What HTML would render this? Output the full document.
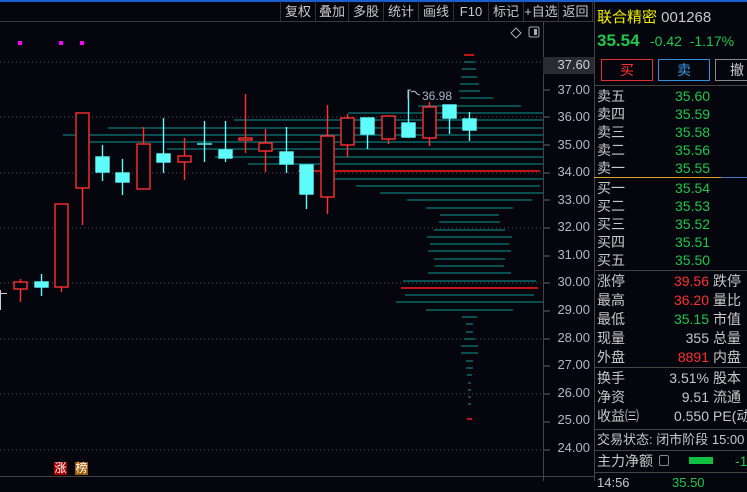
<!DOCTYPE html>
<html><head><meta charset="utf-8"><style>
*{margin:0;padding:0;box-sizing:border-box}
body{width:747px;height:481px;overflow:hidden;background:#05050d;font-family:"Liberation Sans","Noto Sans CJK SC",sans-serif;position:relative;color:#c8c8c8}
.a{position:absolute;white-space:nowrap}
.tb{position:absolute;top:1px;height:21px;font-size:13px;line-height:21px;color:#c8c8c8;text-align:center;border-left:1px solid #333}
.ax{position:absolute;right:157px;font-size:13px;color:#b4b8c4;width:48px;text-align:right}
.r{position:absolute;font-size:14px;line-height:18px;height:18px}
.g{color:#1ec84a}.rd{color:#ff3030}
</style></head><body>
<div class="a" style="left:0;top:0;width:747px;height:2px;background:#1a5fd0"></div>
<div class="a" style="left:0;top:21px;width:594px;height:1px;background:#3a3a3a"></div>
<div class="tb" style="left:280px;width:35px">复权</div>
<div class="tb" style="left:315px;width:33px">叠加</div>
<div class="tb" style="left:348px;width:35px">多股</div>
<div class="tb" style="left:383px;width:35px">统计</div>
<div class="tb" style="left:418px;width:35px">画线</div>
<div class="tb" style="left:453px;width:35px">F10</div>
<div class="tb" style="left:488px;width:35px">标记</div>
<div class="tb" style="left:523px;width:35px">+自选</div>
<div class="tb" style="left:558px;width:35px;border-right:1px solid #333">返回</div>
<svg class="a" style="left:0;top:0" width="594" height="481">
<g stroke="#555" stroke-dasharray="1,3">
<line x1="0" y1="62" x2="543" y2="62"/><line x1="0" y1="117" x2="543" y2="117"/><line x1="0" y1="173" x2="543" y2="173"/><line x1="0" y1="228" x2="543" y2="228"/><line x1="0" y1="283" x2="543" y2="283"/><line x1="0" y1="339" x2="543" y2="339"/><line x1="0" y1="394" x2="543" y2="394"/><line x1="0" y1="450" x2="543" y2="450"/>
</g>
<line x1="543.5" y1="22" x2="543.5" y2="481" stroke="#444"/>
<line x1="0" y1="476.5" x2="594" y2="476.5" stroke="#444"/>
<g stroke="#666"><line x1="544" y1="90" x2="550" y2="90"/><line x1="544" y1="117" x2="550" y2="117"/><line x1="544" y1="145" x2="550" y2="145"/><line x1="544" y1="173" x2="550" y2="173"/><line x1="544" y1="200" x2="550" y2="200"/><line x1="544" y1="228" x2="550" y2="228"/><line x1="544" y1="256" x2="550" y2="256"/><line x1="544" y1="283" x2="550" y2="283"/><line x1="544" y1="311" x2="550" y2="311"/><line x1="544" y1="339" x2="550" y2="339"/><line x1="544" y1="366" x2="550" y2="366"/><line x1="544" y1="394" x2="550" y2="394"/><line x1="544" y1="422" x2="550" y2="422"/><line x1="544" y1="450" x2="550" y2="450"/></g>
<g stroke="#0a7a7a" stroke-width="1.3">
<line x1="464" y1="62" x2="475" y2="62"/><line x1="462" y1="69" x2="476" y2="69"/><line x1="461" y1="77" x2="477" y2="77"/><line x1="460" y1="84" x2="479" y2="84"/><line x1="459" y1="91" x2="480" y2="91"/><line x1="460" y1="98" x2="493" y2="98"/><line x1="418" y1="106" x2="521" y2="106"/><line x1="348" y1="113" x2="543" y2="113"/>
<line x1="234" y1="120" x2="543" y2="120"/><line x1="108" y1="128" x2="543" y2="128"/><line x1="63" y1="135" x2="543" y2="135"/><line x1="87" y1="142" x2="543" y2="142"/><line x1="167" y1="149" x2="543" y2="149"/><line x1="215" y1="157" x2="543" y2="157"/><line x1="248" y1="164" x2="543" y2="164"/>
<line x1="334" y1="179" x2="543" y2="179"/><line x1="356" y1="186" x2="540" y2="186"/><line x1="380" y1="193" x2="543" y2="193"/><line x1="407" y1="200" x2="532" y2="200"/><line x1="426" y1="208" x2="513" y2="208"/><line x1="440" y1="215" x2="499" y2="215"/><line x1="439" y1="222" x2="500" y2="222"/><line x1="434" y1="230" x2="505" y2="230"/><line x1="427" y1="237" x2="512" y2="237"/><line x1="430" y1="244" x2="509" y2="244"/><line x1="428" y1="251" x2="511" y2="251"/><line x1="434" y1="259" x2="505" y2="259"/><line x1="435" y1="266" x2="504" y2="266"/><line x1="428" y1="273" x2="511" y2="273"/><line x1="403" y1="281" x2="536" y2="281"/><line x1="405" y1="295" x2="534" y2="295"/><line x1="396" y1="302" x2="543" y2="302"/><line x1="426" y1="310" x2="513" y2="310"/><line x1="462" y1="317" x2="477" y2="317"/><line x1="466" y1="324" x2="473" y2="324"/><line x1="466" y1="332" x2="473" y2="332"/><line x1="464" y1="339" x2="475" y2="339"/><line x1="461" y1="346" x2="478" y2="346"/><line x1="461" y1="353" x2="478" y2="353"/><line x1="466" y1="361" x2="473" y2="361"/><line x1="466" y1="368" x2="473" y2="368"/><line x1="467" y1="375" x2="472" y2="375"/><line x1="468" y1="383" x2="471" y2="383"/><line x1="468" y1="390" x2="471" y2="390"/><line x1="468" y1="397" x2="471" y2="397"/><line x1="468" y1="404" x2="471" y2="404"/>
</g>
<g stroke="#ff1a1a" stroke-width="1.5"><line x1="298" y1="171" x2="540" y2="171"/><line x1="401" y1="288" x2="538" y2="288"/><line x1="464" y1="55" x2="474" y2="55"/><line x1="467" y1="419" x2="472" y2="419"/></g>
<g stroke="#ccc"><line x1="0.5" y1="290" x2="0.5" y2="310"/><line x1="0" y1="293.5" x2="7" y2="293.5"/></g>
<g stroke="#ff3030" fill="#05050d" stroke-width="1.4">
<line x1="20.5" y1="279" x2="20.5" y2="302"/><rect x="14" y="282" width="13" height="7"/>
<line x1="61.5" y1="287" x2="61.5" y2="292"/><rect x="55" y="204" width="13" height="83"/>
<line x1="82.5" y1="188" x2="82.5" y2="225"/><rect x="76" y="113" width="13" height="75"/>
<line x1="143.5" y1="127" x2="143.5" y2="144"/><rect x="137" y="144" width="13" height="45"/>
<line x1="184.5" y1="138" x2="184.5" y2="180"/><rect x="178" y="156" width="13" height="6"/>
<line x1="245.5" y1="94" x2="245.5" y2="153"/><rect x="239" y="138" width="13" height="2"/>
<line x1="265.5" y1="129" x2="265.5" y2="172"/><rect x="259" y="143" width="13" height="8"/>
<line x1="327.5" y1="105" x2="327.5" y2="214"/><rect x="321" y="136" width="13" height="61"/>
<line x1="347.5" y1="114" x2="347.5" y2="157"/><rect x="341" y="118" width="13" height="27"/>
<line x1="388.5" y1="115" x2="388.5" y2="144"/><rect x="382" y="116" width="13" height="23"/>
<line x1="429.5" y1="102" x2="429.5" y2="146"/><rect x="423" y="107" width="13" height="31"/>
</g>
<g stroke="#5ffcfc" fill="#5ffcfc" stroke-width="1.4">
<line x1="41.5" y1="274" x2="41.5" y2="296"/><rect x="35" y="282" width="13" height="5"/>
<line x1="102.5" y1="145" x2="102.5" y2="181"/><rect x="96" y="157" width="13" height="15"/>
<line x1="122.5" y1="159" x2="122.5" y2="195"/><rect x="116" y="173" width="13" height="9"/>
<line x1="163.5" y1="118" x2="163.5" y2="173"/><rect x="157" y="154" width="13" height="8"/>
<line x1="204.5" y1="121" x2="204.5" y2="162"/><line x1="197" y1="144" x2="212" y2="144"/>
<line x1="225.5" y1="121" x2="225.5" y2="162"/><rect x="219" y="150" width="13" height="8"/>
<line x1="286.5" y1="127" x2="286.5" y2="173"/><rect x="280" y="152" width="13" height="12"/>
<line x1="306.5" y1="194" x2="306.5" y2="209"/><rect x="300" y="165" width="13" height="29"/>
<line x1="367.5" y1="118" x2="367.5" y2="149"/><rect x="361" y="118" width="13" height="16"/>
<line x1="408.5" y1="90" x2="408.5" y2="138"/><rect x="402" y="123" width="13" height="14"/>
<line x1="449.5" y1="105" x2="449.5" y2="134"/><rect x="443" y="105" width="13" height="13"/>
<line x1="469.5" y1="112" x2="469.5" y2="141"/><rect x="463" y="119" width="13" height="11"/>
</g>
<g fill="#ff00ff"><rect x="18" y="41" width="4" height="4"/><rect x="59" y="41" width="4" height="4"/><rect x="80" y="41" width="4" height="4"/></g>
<path d="M408 99 V90 h3 M411 92 q4 -2 6 2 l3 1" stroke="#bbb" fill="none"/>
<text x="422" y="100" font-size="12" fill="#a8b4c8" font-family="Liberation Sans">36.98</text>
<path d="M516 28 l5 5 -5 5 -5 -5z" stroke="#aaa" fill="none"/>
<rect x="529" y="27" width="10" height="10" rx="1.5" stroke="#aaa" fill="none"/><rect x="534" y="29" width="3" height="6" fill="#aaa"/>
</svg>
<div class="a" style="left:543px;top:57px;width:51px;height:17px;background:#2a2a32"></div>
<div class="ax" style="top:57px;color:#d0d0d8">37.60</div>
<div class="ax" style="top:82px">37.00</div>
<div class="ax" style="top:109px">36.00</div>
<div class="ax" style="top:137px">35.00</div>
<div class="ax" style="top:164px">34.00</div>
<div class="ax" style="top:192px">33.00</div>
<div class="ax" style="top:219px">32.00</div>
<div class="ax" style="top:247px">31.00</div>
<div class="ax" style="top:274px">30.00</div>
<div class="ax" style="top:302px">29.00</div>
<div class="ax" style="top:330px">28.00</div>
<div class="ax" style="top:357px">27.00</div>
<div class="ax" style="top:385px">26.00</div>
<div class="ax" style="top:412px">25.00</div>
<div class="ax" style="top:440px">24.00</div>
<div class="a" style="left:54px;top:462px;width:13px;height:13px;background:#a00;color:#fff;font-size:12px;line-height:13px;text-align:center">涨</div>
<div class="a" style="left:75px;top:462px;width:13px;height:13px;background:#a05a00;color:#fff;font-size:12px;line-height:13px;text-align:center">榜</div>
<div class="a" style="left:594px;top:2px;width:1px;height:479px;background:#444"></div>
<div class="a" style="left:597px;top:6px;font-size:15px;color:#f0f000">联合精密 <span style="color:#c8c8c8">001268</span></div>
<div class="a g" style="left:597px;top:31px;font-size:17px;font-weight:bold">35.54</div>
<div class="a g" style="left:650px;top:33px;font-size:14px">-0.42&nbsp;&nbsp;-1.17%</div>
<div class="a" style="left:601px;top:59px;width:52px;height:22px;border:1px solid #e03030;color:#ff3030;font-size:14px;text-align:center;line-height:20px">买</div>
<div class="a" style="left:658px;top:59px;width:52px;height:22px;border:1px solid #3090e0;color:#3a9ae8;font-size:14px;text-align:center;line-height:20px">卖</div>
<div class="a" style="left:715px;top:59px;width:40px;height:22px;border:1px solid #888;color:#ccc;font-size:14px;line-height:20px;padding-left:14px">撤</div>
<div class="a" style="left:594px;top:85px;width:153px;height:1px;background:#444"></div>
<div class="r" style="left:597px;top:87px">卖五</div><div class="r g" style="left:675px;top:87px">35.60</div>
<div class="r" style="left:597px;top:105px">卖四</div><div class="r g" style="left:675px;top:105px">35.59</div>
<div class="r" style="left:597px;top:123px">卖三</div><div class="r g" style="left:675px;top:123px">35.58</div>
<div class="r" style="left:597px;top:141px">卖二</div><div class="r g" style="left:675px;top:141px">35.56</div>
<div class="r" style="left:597px;top:159px">卖一</div><div class="r g" style="left:675px;top:159px">35.55</div>
<div class="a" style="left:594px;top:177px;width:127px;height:1px;background:#e0a020"></div>
<div class="a" style="left:721px;top:177px;width:26px;height:1px;background:#3a7ac8"></div>
<div class="r" style="left:597px;top:179px">买一</div><div class="r g" style="left:675px;top:179px">35.54</div>
<div class="r" style="left:597px;top:197px">买二</div><div class="r g" style="left:675px;top:197px">35.53</div>
<div class="r" style="left:597px;top:215px">买三</div><div class="r g" style="left:675px;top:215px">35.52</div>
<div class="r" style="left:597px;top:233px">买四</div><div class="r g" style="left:675px;top:233px">35.51</div>
<div class="r" style="left:597px;top:251px">买五</div><div class="r g" style="left:675px;top:251px">35.50</div>
<div class="a" style="left:594px;top:270px;width:153px;height:1px;background:#444"></div>
<div class="r" style="left:597px;top:272px">涨停</div><div class="r rd" style="left:650px;top:272px;width:59px;text-align:right">39.56</div><div class="r" style="left:713px;top:272px">跌停</div>
<div class="r" style="left:597px;top:291px">最高</div><div class="r rd" style="left:650px;top:291px;width:59px;text-align:right">36.20</div><div class="r" style="left:713px;top:291px">量比</div>
<div class="r" style="left:597px;top:310px">最低</div><div class="r g" style="left:650px;top:310px;width:59px;text-align:right">35.15</div><div class="r" style="left:713px;top:310px">市值</div>
<div class="r" style="left:597px;top:329px">现量</div><div class="r" style="left:650px;top:329px;width:59px;text-align:right">355</div><div class="r" style="left:713px;top:329px">总量</div>
<div class="r" style="left:597px;top:348px">外盘</div><div class="r rd" style="left:650px;top:348px;width:59px;text-align:right">8891</div><div class="r" style="left:713px;top:348px">内盘</div>
<div class="a" style="left:594px;top:367px;width:153px;height:1px;background:#444"></div>
<div class="r" style="left:597px;top:369px">换手</div><div class="r" style="left:640px;top:369px;width:69px;text-align:right">3.51%</div><div class="r" style="left:713px;top:369px">股本</div>
<div class="r" style="left:597px;top:388px">净资</div><div class="r" style="left:640px;top:388px;width:69px;text-align:right">9.51</div><div class="r" style="left:713px;top:388px">流通</div>
<div class="r" style="left:597px;top:407px">收益㈢</div><div class="r" style="left:640px;top:407px;width:69px;text-align:right">0.550</div><div class="r" style="left:713px;top:407px">PE(动</div>
<div class="a" style="left:594px;top:429px;width:153px;height:1px;background:#444"></div>
<div class="r" style="left:597px;top:431px;font-size:13px">交易状态: 闭市阶段 15:00</div>
<div class="a" style="left:594px;top:450px;width:153px;height:1px;background:#444"></div>
<div class="r" style="left:597px;top:452px">主力净额</div>
<div class="a" style="left:659px;top:455px;width:10px;height:11px;border:1px solid #888;border-radius:2px"></div>
<div class="a" style="left:689px;top:457px;width:24px;height:7px;background:#10c040"></div>
<div class="r g" style="left:735px;top:452px">-1</div>
<div class="a" style="left:594px;top:472px;width:153px;height:1px;background:#444"></div>
<div class="r" style="left:597px;top:474px;font-size:13px">14:56</div><div class="r g" style="left:672px;top:474px;font-size:13px">35.50</div>
</body></html>
